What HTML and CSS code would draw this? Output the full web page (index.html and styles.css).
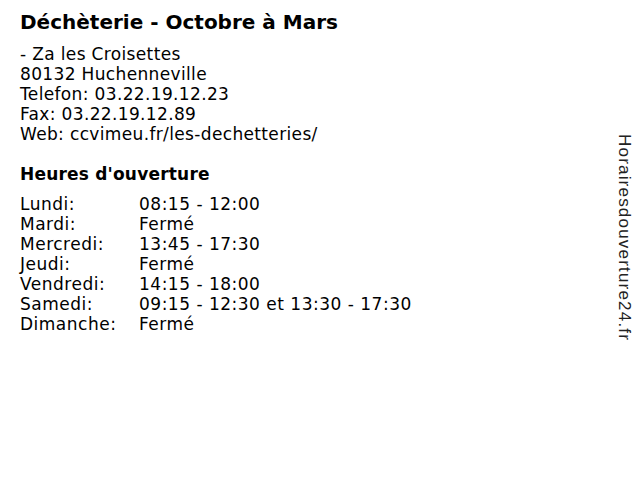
FILE: index.html
```html
<!DOCTYPE html>
<html lang="fr">
<head>
<meta charset="utf-8">
<title>Déchèterie - Octobre à Mars</title>
<link rel="stylesheet" href="styles.css">
</head>
<body>
<div class="page">
  <main class="main">
    <h1 class="title">Déchèterie - Octobre à Mars</h1>
    <div class="address">
      <div>- Za les Croisettes</div>
      <div>80132 Huchenneville</div>
      <div>Telefon: 03.22.19.12.23</div>
      <div>Fax: 03.22.19.12.89</div>
      <div>Web: ccvimeu.fr/les-dechetteries/</div>
    </div>
    <h2 class="subtitle">Heures d'ouverture</h2>
    <div class="hours">
      <div class="day">Lundi:</div><div class="time">08:15 - 12:00</div>
      <div class="day">Mardi:</div><div class="time">Fermé</div>
      <div class="day">Mercredi:</div><div class="time">13:45 - 17:30</div>
      <div class="day">Jeudi:</div><div class="time">Fermé</div>
      <div class="day">Vendredi:</div><div class="time">14:15 - 18:00</div>
      <div class="day">Samedi:</div><div class="time">09:15 - 12:30 et 13:30 - 17:30</div>
      <div class="day">Dimanche:</div><div class="time">Fermé</div>
    </div>
  </main>
  <aside class="brand">Horairesdouverture24.fr</aside>
</div>
</body>
</html>
```
FILE: styles.css
```css
html, body {
  margin: 0;
  padding: 0;
  background: #fff;
}
body {
  font-family: "DejaVu Sans", Verdana, sans-serif;
  color: #000;
}
.page {
  display: flex;
  width: 640px;
  height: 480px;
}
.main {
  flex: 1;
  padding: 10px 0 0 20px;
}
.title {
  margin: 0;
  font-size: 20px;
  line-height: 24px;
  font-weight: bold;
}
.address {
  margin-top: 10px;
  font-size: 17px;
  line-height: 20px;
  letter-spacing: 0.35px;
}
.subtitle {
  margin: 20px 0 0 0;
  font-size: 17px;
  line-height: 20px;
  font-weight: bold;
  letter-spacing: 0.2px;
}
.hours {
  margin-top: 10px;
  display: grid;
  grid-template-columns: 119px auto;
  font-size: 17px;
  line-height: 20px;
  letter-spacing: 0.5px;
}
.brand {
  writing-mode: vertical-rl;
  font-family: "Liberation Sans", Arial, sans-serif;
  font-size: 17px;
  letter-spacing: 1.2px;
  color: #222;
  padding: 134px 6px 0 0;
  line-height: 20px;
}
```
